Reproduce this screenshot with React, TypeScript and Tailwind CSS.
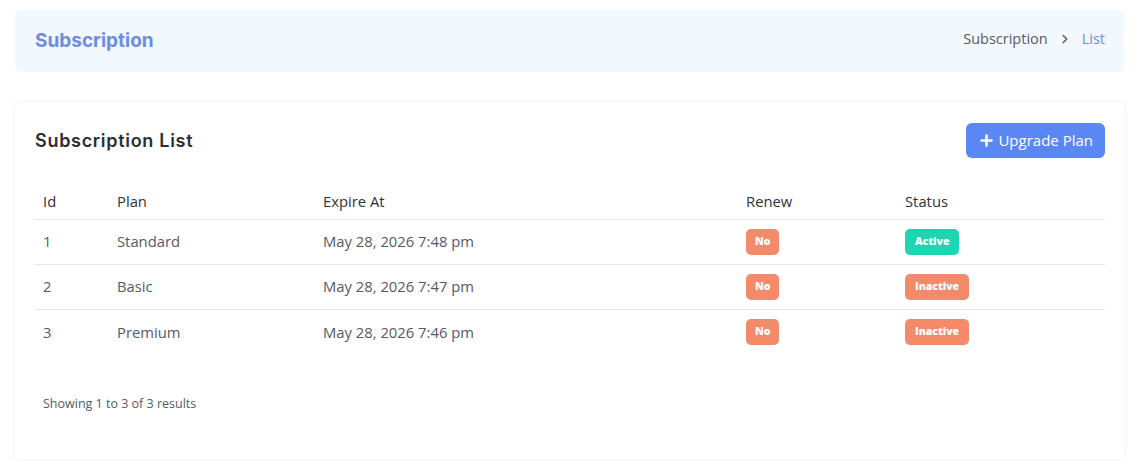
import React from 'react';
import { Plus, ChevronRight } from 'lucide-react';

const rows = [
  { id: 1, plan: 'Standard', expire: 'May 28, 2026 7:48 pm', renew: false, active: true },
  { id: 2, plan: 'Basic', expire: 'May 28, 2026 7:47 pm', renew: false, active: false },
  { id: 3, plan: 'Premium', expire: 'May 28, 2026 7:46 pm', renew: false, active: false },
];

export default function App() {
  return (
    <div className="min-h-screen bg-white pl-[15px] pr-[14px] pt-[10px] pb-[5px] font-['Open_Sans',sans-serif]">
      <div className="flex h-[62px] items-center justify-between rounded-md bg-[#f3f7fe] pl-[20px] pr-[19px]">
        <h1 className="font-['Inter',sans-serif] text-[19px] font-bold text-[#6b8edf]">Subscription</h1>
        <div className="mb-[4px] flex items-center text-[14.5px] text-[#555b64]">
          <span>Subscription</span>
          <ChevronRight className="mx-[10px] h-[14px] w-[14px] text-[#666]" strokeWidth={3} />
          <span className="text-[#6b8edf]">List</span>
        </div>
      </div>

      <div className="mt-[30px] rounded-md bg-white pl-[20px] pr-[19px] pt-[21px] pb-[45px] shadow-[0_0_6px_rgba(0,0,0,0.07)]">
        <div className="flex items-center justify-between">
          <h2 className="font-['Inter',sans-serif] text-[18px] font-semibold tracking-[0.7px] text-[#2a2f36]">
            Subscription List
          </h2>
          <button className="flex h-[35px] items-center rounded-md bg-[#5b87f4] px-[12px] text-[15px] text-white">
            <Plus className="mr-[3px] h-[17px] w-[17px]" strokeWidth={3.5} />
            Upgrade Plan
          </button>
        </div>

        <table className="mt-[25px] w-full text-left text-[14.8px]">
          <thead>
            <tr className="h-[36px] border-b border-[#e6e8eb] text-[#2e333a]">
              <th className="w-[74px] px-[8px] font-normal">Id</th>
              <th className="w-[206px] px-[8px] font-normal">Plan</th>
              <th className="w-[422px] px-[8px] font-normal">Expire At</th>
              <th className="w-[159px] px-[9px] font-normal">Renew</th>
              <th className="px-[9px] font-normal">Status</th>
            </tr>
          </thead>
          <tbody className="text-[#555b64]">
            {rows.map((r) => (
              <tr key={r.id} className="h-[45px] border-b border-[#e6e8eb] last:border-b-0">
                <td className="px-[8px]">{r.id}</td>
                <td className="px-[8px]">{r.plan}</td>
                <td className="px-[8px]">{r.expire}</td>
                <td className="px-[9px]">
                  <span className="inline-flex h-[26px] items-center rounded-[5px] bg-[#f38b6b] px-[9px] text-[10.5px] font-extrabold text-white">
                    {r.renew ? 'Yes' : 'No'}
                  </span>
                </td>
                <td className="px-[9px]">
                  {r.active ? (
                    <span className="inline-flex h-[26px] items-center rounded-[5px] bg-[#1dd6b1] px-[10px] text-[10.5px] font-extrabold text-white">
                      Active
                    </span>
                  ) : (
                    <span className="inline-flex h-[26px] items-center rounded-[5px] bg-[#f38b6b] px-[10px] text-[10.5px] font-extrabold text-white">
                      Inactive
                    </span>
                  )}
                </td>
              </tr>
            ))}
          </tbody>
        </table>

        <p className="mt-[41px] px-[8px] text-[12.5px] text-[#555b64]">Showing 1 to 3 of 3 results</p>
      </div>
    </div>
  );
}
